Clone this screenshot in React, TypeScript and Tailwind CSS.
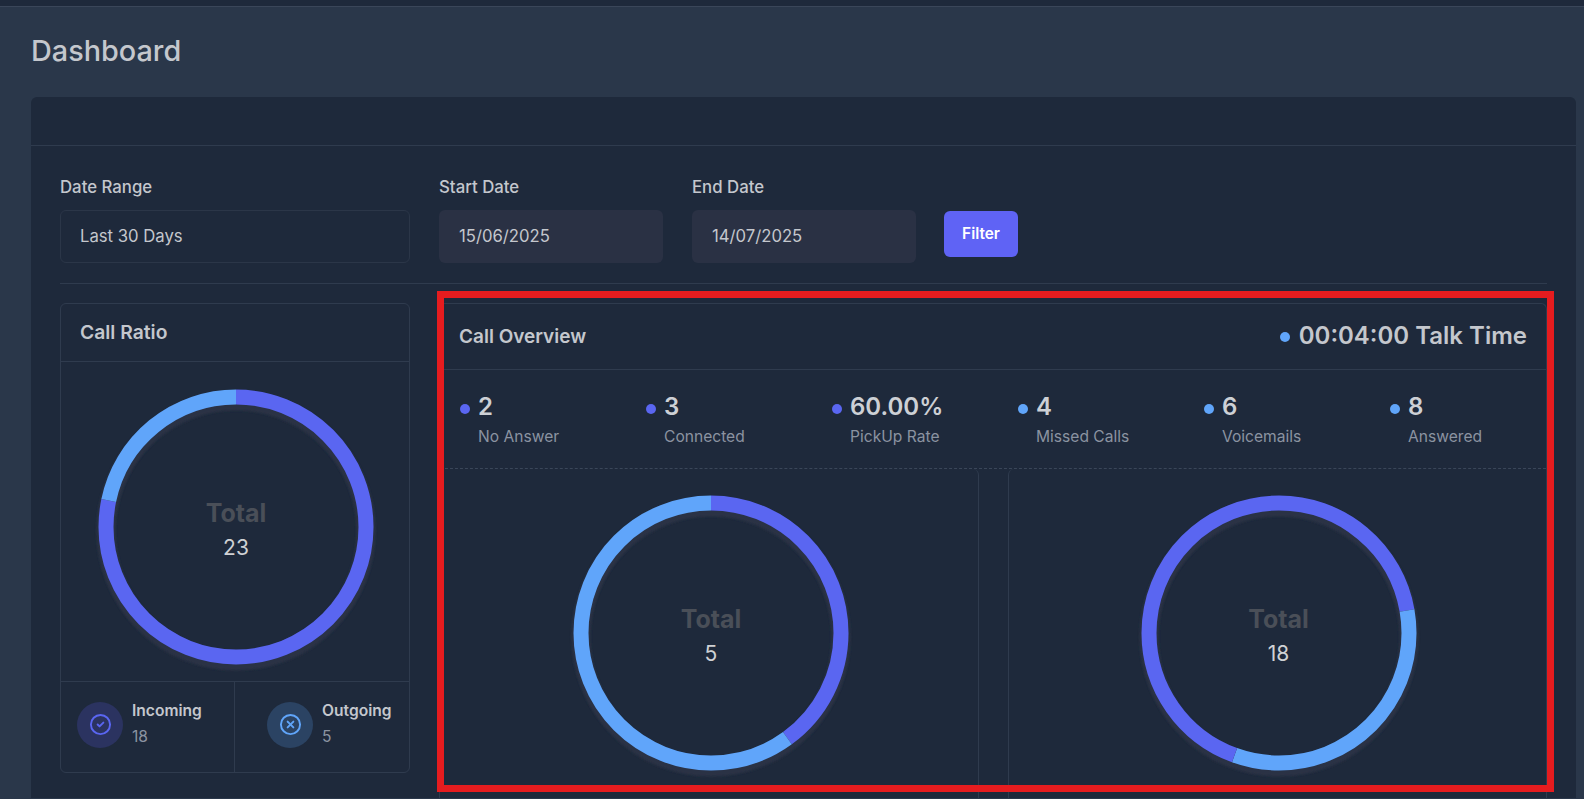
import { CircleCheck, CircleX } from 'lucide-react';

const INDIGO = '#5a66f1';
const BLUE = '#60a5fa';

interface DonutProps {
  total: number;
  segments: { value: number; color: string }[];
}

function Donut({ total, segments }: DonutProps) {
  let offset = 0;
  return (
    <div className="relative h-[290px] w-[290px]">
      <svg width="290" height="290" viewBox="0 0 290 290">
        <defs>
          <filter id="ringShadow" x="-10%" y="-10%" width="120%" height="120%">
            <feGaussianBlur stdDeviation="1" />
          </filter>
        </defs>
        <circle cx="145" cy="149" r="130" fill="none" stroke="#2a3345" strokeWidth="19" filter="url(#ringShadow)" />
        {segments.map((s, i) => {
          const len = (s.value / total) * 360;
          const el = (
            <circle
              key={i}
              cx="145"
              cy="145"
              r="130"
              fill="none"
              stroke={s.color}
              strokeWidth="15"
              pathLength={360}
              strokeDasharray={`${len} ${360 - len}`}
              strokeDashoffset={-offset}
              transform="rotate(-90 145 145)"
            />
          );
          offset += len;
          return el;
        })}
      </svg>
      <div className="absolute inset-0 flex flex-col items-center pt-[116px]">
        <div className="text-[25px] leading-[30px] font-bold text-[#4a4f58]">Total</div>
        <div className="mt-[5px] text-[21px] leading-[30px] text-[#cfd1d4]">{total}</div>
      </div>
    </div>
  );
}

function Stat({ color, value, label }: { color: string; value: string; label: string }) {
  return (
    <div className="flex w-[186px] shrink-0 gap-[8px]">
      <span className="mt-[13px] h-[10px] w-[10px] rounded-full" style={{ backgroundColor: color }} />
      <div>
        <div className="text-[24px] leading-[32px] font-semibold text-[#cdd0d5]">{value}</div>
        <div className="mt-[3px] text-[15.6px] leading-[22px] text-[#8b93a1]">{label}</div>
      </div>
    </div>
  );
}

function Field({ label, value, filled, width }: { label: string; value: string; filled?: boolean; width: string }) {
  return (
    <div className={width}>
      <div className="mb-[12px] text-[16.8px] leading-[22px] font-medium text-[#c4c7cd]">{label}</div>
      <div
        className={
          filled
            ? 'flex h-[53px] items-center rounded-[6px] bg-[#2a3144] px-[20px] text-[16.7px] text-[#c4c7cd]'
            : 'flex h-[53px] items-center rounded-[6px] border border-[#2b3648] px-[19px] text-[16.7px] text-[#c4c7cd]'
        }
      >
        {value}
      </div>
    </div>
  );
}

export default function App() {
  return (
    <div className="relative h-[799px] w-[1584px] overflow-hidden bg-[#2a374a] font-['Inter',sans-serif]">
      <div className="h-[7px] border-b border-[#3a4659] bg-[#1e293b]" />

      <div className="flex h-[90px] items-start pl-[31px] pt-[24px]">
        <h1 className="text-[28.8px] leading-[40px] font-medium text-[#c4c7cd]">Dashboard</h1>
      </div>

      <div className="ml-[31px] mr-[8px] h-[701px] overflow-hidden rounded-t-[6px] bg-[#1e293b]">
        <div className="h-[49px] border-b border-[#2f3b4e]" />

        <div className="px-[29px]">
          <div className="flex h-[138px] items-start gap-[29px] border-b border-[#2f3b4e] pt-[30px]">
            <Field width="w-[350px]" label="Date Range" value="Last 30 Days" />
            <Field width="w-[224px]" label="Start Date" value="15/06/2025" filled />
            <Field width="w-[224px]" label="End Date" value="14/07/2025" filled />
            <button className="-ml-[1px] mt-[35px] h-[46px] w-[74px] rounded-[6px] bg-[#5f63f5] text-[15.4px] font-semibold text-white">
              Filter
            </button>
          </div>

          <div className="flex items-start gap-[29px] pt-[19px]">
            {/* Call Ratio */}
            <div className="w-[350px] rounded-[6px] border border-[#2f3b4e]">
              <div className="flex h-[58px] items-center border-b border-[#2f3b4e] px-[19px] text-[19.3px] font-semibold text-[#c4c7cd]">
                Call Ratio
              </div>
              <div className="flex h-[320px] justify-center border-b border-[#2f3b4e] pl-[2px] pt-[20px]">
                <Donut
                  total={23}
                  segments={[
                    { value: 18, color: INDIGO },
                    { value: 5, color: BLUE },
                  ]}
                />
              </div>
              <div className="flex h-[90px]">
                <div className="flex w-[174px] items-center gap-[9px] border-r border-[#2f3b4e] pb-[5px] pl-[16px]">
                  <span className="flex h-[46px] w-[46px] items-center justify-center rounded-full bg-[#2b3360] text-[#5a66f1]">
                    <CircleCheck size={23} strokeWidth={2} />
                  </span>
                  <div className="mb-[2px]">
                    <div className="text-[15.6px] leading-[22px] font-semibold text-[#c4c7cd]">Incoming</div>
                    <div className="mt-[4px] text-[15.6px] leading-[22px] text-[#8b93a1]">18</div>
                  </div>
                </div>
                <div className="flex flex-1 items-center gap-[9px] pb-[5px] pl-[32px]">
                  <span className="flex h-[46px] w-[46px] items-center justify-center rounded-full bg-[#2b4363] text-[#60a5fa]">
                    <CircleX size={23} strokeWidth={2} />
                  </span>
                  <div className="mb-[2px]">
                    <div className="text-[15.6px] leading-[22px] font-semibold text-[#c4c7cd]">Outgoing</div>
                    <div className="mt-[4px] text-[15.6px] leading-[22px] text-[#8b93a1]">5</div>
                  </div>
                </div>
              </div>
            </div>

            {/* Call Overview */}
            <div className="h-[500px] w-[1108px] rounded-t-[6px] border-x border-t border-[#2f3b4e]">
              <div className="flex h-[66px] items-center justify-between border-b border-[#2f3b4e] px-[19px]">
                <span className="mt-[2px] text-[19px] font-semibold text-[#c4c7cd]">Call Overview</span>
                <span className="-mt-[2px] flex items-center gap-[9px] text-[24px] font-semibold text-[#c4c7cd]">
                  <span className="mt-[2px] h-[10px] w-[10px] rounded-full bg-[#60a5fa]" />
                  00:04:00 Talk Time
                </span>
              </div>
              <div className="flex h-[99px] items-start border-b border-dashed border-[#3a4659] pl-[20px] pt-[21px]">
                <Stat color={INDIGO} value="2" label="No Answer" />
                <Stat color={INDIGO} value="3" label="Connected" />
                <Stat color={INDIGO} value="60.00%" label="PickUp Rate" />
                <Stat color={BLUE} value="4" label="Missed Calls" />
                <Stat color={BLUE} value="6" label="Voicemails" />
                <Stat color={BLUE} value="8" label="Answered" />
              </div>
              <div className="flex h-[340px] gap-[29px] pl-[4px]">
                <div className="flex w-[535px] justify-center rounded-tr-[6px] border-r border-[#2f3b4e] pt-[19px]">
                  <Donut
                    total={5}
                    segments={[
                      { value: 2, color: INDIGO },
                      { value: 3, color: BLUE },
                    ]}
                  />
                </div>
                <div className="flex flex-1 justify-center rounded-tl-[6px] border-l border-[#2f3b4e] pl-[2px] pt-[19px]">
                  <Donut
                    total={18}
                    segments={[
                      { value: 4, color: INDIGO },
                      { value: 6, color: BLUE },
                      { value: 8, color: INDIGO },
                    ]}
                  />
                </div>
              </div>
            </div>
          </div>
        </div>
      </div>

      {/* red highlight drawn over the screenshot */}
      <div className="absolute left-[437px] top-[291px] h-[501px] w-[1117px] border-[7px] border-[#e61c1f]" />
    </div>
  );
}
